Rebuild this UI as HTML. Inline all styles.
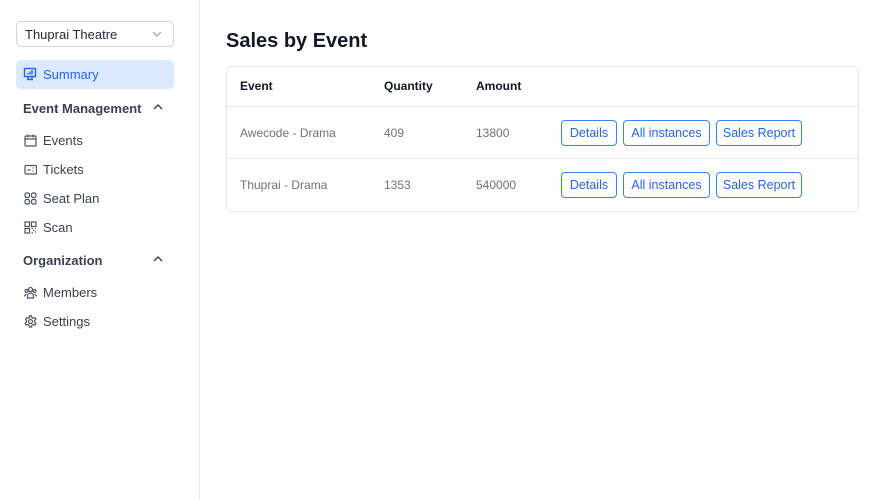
<!DOCTYPE html>
<html><head><style>
*{margin:0;padding:0;box-sizing:border-box}
body{width:871px;height:500px;background:#fff;font-family:"Liberation Sans",sans-serif;position:relative;overflow:hidden;color:#1f2937}
.a{position:absolute}
.side{left:0;top:0;width:200px;height:500px;border-right:1px solid #e5e7eb}
.sel{left:16px;top:21px;width:158px;height:26px;border:1px solid #d1d5db;border-radius:5px;font-size:13px;padding:5px 8px;color:#1f2937}
.sum{left:16px;top:60px;width:158px;height:29px;background:#dbeafe;border-radius:5px;color:#2563eb;font-size:13px;padding:7px 0 0 27px}
.h{left:23px;font-size:13px;font-weight:bold;color:#374151}
.it{left:43px;font-size:13px;color:#374151}
.ic{left:24px;width:13px;height:13px}
.car{left:153px}
.title{left:226px;top:30px;font-size:20px;font-weight:bold;color:#111827}
.tbl{left:226px;top:66px;width:633px;height:146px;border:1px solid #e5e7eb;border-radius:5px}
.th{font-size:12px;font-weight:bold;color:#111827;top:79px}
.td{font-size:12px;color:#6b7280}
.line{left:227px;width:631px;height:1px;background:#e5e7eb}
.b{height:26px;border:1px solid #3b82f6;border-radius:4px;color:#2563eb;font-size:12.5px;text-align:center;line-height:24px}
</style></head><body>
<div class="a side"></div>
<div class="a sel">Thuprai Theatre</div>
<svg class="a" style="left:152px;top:30px" width="10" height="8"><path d="M1 2l4 4 4-4" fill="none" stroke="#9ca3af" stroke-width="1.2"/></svg>
<div class="a sum">Summary</div>
<svg class="a" style="left:23px;top:67px" width="14" height="14" fill="none" stroke="#2563eb" stroke-width="1.4"><rect x="1.5" y="1.5" width="11" height="8"/><path d="M4 12.5h6M5 10v2.5M9 10v2.5M5 7.5v-1.5M7 7.5v-3M9 7.5v-4.5"/></svg>
<div class="a h" style="top:101px">Event Management</div>
<svg class="a car" style="top:103px" width="10" height="8"><path d="M1 6l4-4 4 4" fill="none" stroke="#374151" stroke-width="1.4"/></svg>
<svg class="a ic" style="top:134px" fill="none" stroke="#4b5563" stroke-width="1.2"><rect x="1" y="2" width="11" height="10" rx="1"/><path d="M1 5h11M4 .5v3M9 .5v3"/></svg>
<div class="a it" style="top:133px">Events</div>
<svg class="a ic" style="top:163px" fill="none" stroke="#4b5563" stroke-width="1.2"><rect x="1" y="2.5" width="11.5" height="8.5" rx="1"/><path d="M3.5 7h3M9 4.5v1M9 7.5v1"/></svg>
<div class="a it" style="top:162px">Tickets</div>
<svg class="a ic" style="top:192px" fill="none" stroke="#4b5563" stroke-width="1.2"><rect x="1" y="1" width="4.5" height="4.5" rx="1.5"/><rect x="7.5" y="1" width="4.5" height="4.5" rx="1.5"/><rect x="1" y="7.5" width="4.5" height="4.5" rx="1.5"/><rect x="7.5" y="7.5" width="4.5" height="4.5" rx="1.5"/></svg>
<div class="a it" style="top:191px">Seat Plan</div>
<svg class="a ic" style="top:221px" fill="none" stroke="#4b5563" stroke-width="1.2"><rect x="1" y="1" width="4.5" height="4.5"/><rect x="7.5" y="1" width="4.5" height="4.5"/><rect x="1" y="7.5" width="4.5" height="4.5"/><path d="M7.5 7.5h1.5M11 7.5h1M9 9.5h1.5M7.5 12h1.5M11 11h1"/></svg>
<div class="a it" style="top:220px">Scan</div>
<div class="a h" style="top:253px">Organization</div>
<svg class="a car" style="top:255px" width="10" height="8"><path d="M1 6l4-4 4 4" fill="none" stroke="#374151" stroke-width="1.4"/></svg>
<svg class="a ic" style="top:286px" fill="none" stroke="#4b5563" stroke-width="1.2"><circle cx="6.5" cy="3.5" r="2"/><circle cx="2.5" cy="5" r="1.5"/><circle cx="10.5" cy="5" r="1.5"/><path d="M3.5 12v-2a3 3 0 016 0v2zM.5 10.5a2 2 0 012-2M12.5 10.5a2 2 0 00-2-2"/></svg>
<div class="a it" style="top:285px">Members</div>
<svg class="a ic" style="top:315px" fill="none" stroke="#4b5563" stroke-width="1.2"><circle cx="6.5" cy="6.5" r="2"/><path d="M5.5 .8h2l.4 1.7 1.4.8 1.6-.6 1 1.7-1.3 1.2v1.6l1.3 1.2-1 1.7-1.6-.6-1.4.8-.4 1.7h-2l-.4-1.7-1.4-.8-1.6.6-1-1.7 1.3-1.2V5.6L1.7 4.4l1-1.7 1.6.6 1.4-.8z"/></svg>
<div class="a it" style="top:314px">Settings</div>

<div class="a title">Sales by Event</div>
<div class="a tbl"></div>
<div class="a th" style="left:240px">Event</div>
<div class="a th" style="left:384px">Quantity</div>
<div class="a th" style="left:476px">Amount</div>
<div class="a line" style="top:106px"></div>
<div class="a line" style="top:158px"></div>
<div class="a td" style="left:240px;top:126px">Awecode - Drama</div>
<div class="a td" style="left:384px;top:126px">409</div>
<div class="a td" style="left:476px;top:126px">13800</div>
<div class="a b" style="left:561px;top:120px;width:56px">Details</div>
<div class="a b" style="left:623px;top:120px;width:87px">All instances</div>
<div class="a b" style="left:716px;top:120px;width:86px">Sales Report</div>
<div class="a td" style="left:240px;top:178px">Thuprai - Drama</div>
<div class="a td" style="left:384px;top:178px">1353</div>
<div class="a td" style="left:476px;top:178px">540000</div>
<div class="a b" style="left:561px;top:172px;width:56px">Details</div>
<div class="a b" style="left:623px;top:172px;width:87px">All instances</div>
<div class="a b" style="left:716px;top:172px;width:86px">Sales Report</div>
</body></html>
